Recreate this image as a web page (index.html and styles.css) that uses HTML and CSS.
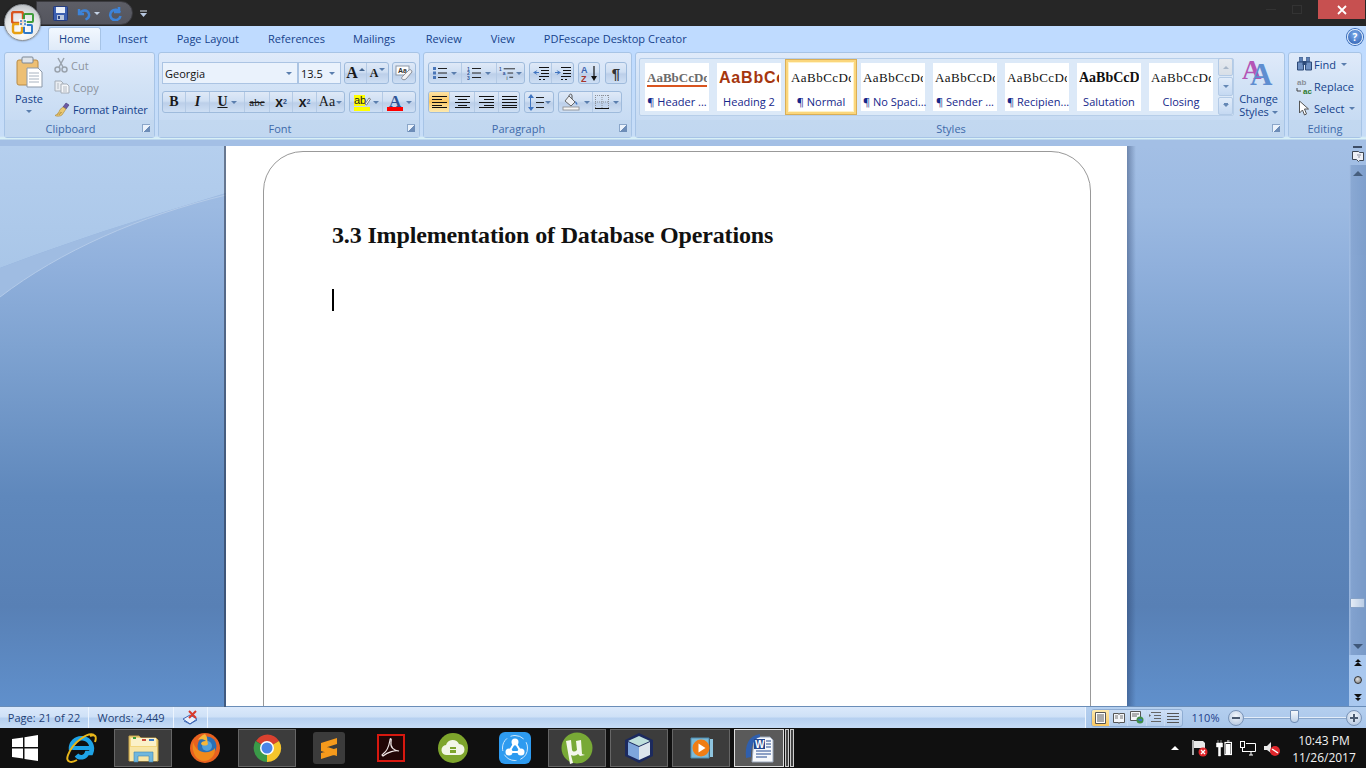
FILE: index.html
```html
<!DOCTYPE html>
<html lang="en">
<head>
    <meta charset="UTF-8">
    <title>Microsoft Word</title>
    <link rel="stylesheet" href="styles.css">
</head>
<body>
    <!-- office orb sits over the title bar and the tabs -->
    <div class="office-btn">
        <svg width="24" height="24" viewBox="0 0 24 24">
            <rect x="1" y="1" width="11" height="11" rx="2" fill="none" stroke="#d9561f" stroke-width="2.4"/>
            <rect x="13" y="3" width="9" height="8" rx="1" fill="none" stroke="#3f9d3c" stroke-width="2"/>
            <rect x="2" y="13" width="9" height="9" rx="2" fill="none" stroke="#e8a012" stroke-width="2.4"/>
            <rect x="13" y="14" width="8" height="8" rx="1" fill="none" stroke="#2f79c9" stroke-width="2"/>
            <path d="M8 8h8v8H8z" fill="#fff" opacity=".75"/>
            <path d="M9 10h2M13 10h2M9 13h2M13 13h2" stroke="#3a78c2" stroke-width="1.6"/>
        </svg>
    </div>

    <header class="titlebar">
        <div class="qat">
            <svg width="15" height="15" viewBox="0 0 15 15"><rect x=".5" y=".5" width="14" height="14" rx="1" fill="#3c5fb0" stroke="#243b7c"/><rect x="3" y="1" width="9" height="6" fill="#e8eef8"/><rect x="4" y="9" width="7" height="5" fill="#b9c6dd"/><rect x="5" y="10" width="2" height="3" fill="#2c4586"/></svg>
            <svg class="qat-undo" width="15" height="15" viewBox="0 0 15 15"><path d="M3 3v5h5M3.500 7.500C6 3.500 12 3.500 13 8c.5 2.500-1 4.500-3.500 5.500" fill="none" stroke="#3d83d8" stroke-width="2.400"/></svg>
            <span class="arr arr-light"></span>
            <svg class="qat-redo" width="15" height="15" viewBox="0 0 15 15"><path d="M11 1v5H6M12 6.500A5.200 5.200 0 1 0 12.500 10" fill="none" stroke="#3d83d8" stroke-width="2.600"/></svg>
        </div>
        <svg class="qat-more" width="7" height="7" viewBox="0 0 7 7"><path d="M0 1h7" stroke="#dfe7f2"/><path d="M0 3h7L3.500 7z" fill="#b8c8e0"/></svg>
        <div class="win-btns">
            <span class="win-ghost win-min"></span>
            <span class="win-ghost win-max"></span>
            <span class="win-close">
                <svg width="10" height="10" viewBox="0 0 10 10"><path d="M1 1l8 8M9 1l-8 8" stroke="#fff" stroke-width="1.800"/></svg>
            </span>
        </div>
    </header>

    <nav class="tabs">
        <span class="tab tab-active">Home</span>
        <span class="tab">Insert</span>
        <span class="tab">Page Layout</span>
        <span class="tab">References</span>
        <span class="tab tab-mail">Mailings</span>
        <span class="tab tab-review">Review</span>
        <span class="tab">View</span>
        <span class="tab">PDFescape Desktop Creator</span>
        <span class="help">?</span>
    </nav>

    <div class="ribbon">
        <section class="group group-clipboard">
            <div class="group-body clip-body">
                <div class="paste">
                    <svg width="27" height="32" viewBox="0 0 27 32"><rect x="1" y="4" width="21" height="25" rx="2" fill="#edbf73" stroke="#b88a44"/><rect x="6" y="1" width="11" height="6" rx="1" fill="#dfe4ea" stroke="#7c8794"/><path d="M11 12h11l4 4v15H11z" fill="#fff" stroke="#8b98a8"/><path d="M13 17h10M13 20h10M13 23h10M13 26h10" stroke="#a8b3c0"/></svg>
                    <span class="paste-label">Paste</span>
                    <span class="arr"></span>
                </div>
                <div class="clip-list">
                    <div class="clip-item is-disabled">
                        <svg width="14" height="16" viewBox="0 0 14 16"><path d="M4 1l5 9M10 1L5 10" stroke="#9aa3ad" stroke-width="1.500"/><circle cx="3.500" cy="12.500" r="2.500" fill="none" stroke="#9aa3ad" stroke-width="1.500"/><circle cx="10.500" cy="12.500" r="2.500" fill="none" stroke="#9aa3ad" stroke-width="1.500"/></svg>
                        <span>Cut</span>
                    </div>
                    <div class="clip-item is-disabled">
                        <svg width="16" height="14" viewBox="0 0 16 14"><path d="M1 1h6l2 2v8H1z" fill="#e9edf2" stroke="#a5adb7"/><path d="M7 4h6l2 2v7H7z" fill="#f5f7fa" stroke="#a5adb7"/><path d="M9 7h4M9 9h4M9 11h4M3 4h2M3 6h2M3 8h2" stroke="#b3bac3"/></svg>
                        <span>Copy</span>
                    </div>
                    <div class="clip-item clip-painter">
                        <svg width="16" height="16" viewBox="0 0 16 16"><path d="M9 6l3-4 3 2-3 4z" fill="#6b5aa6" stroke="#3e3470" stroke-width=".6"/><path d="M9 6l3 2-4 6c-2 1.500-5 1.500-7 .5 2-1 4-3 5-6z" fill="#eac873" stroke="#a8873a" stroke-width=".6"/><path d="M3 14l4-3M5 14l3-3" stroke="#a8873a" stroke-width=".6"/></svg>
                        <span>Format Painter</span>
                    </div>
                </div>
            </div>
            <div class="group-label">Clipboard<span class="launcher"></span></div>
        </section>

        <section class="group group-font">
            <div class="group-body tool-rows">
                <div class="tool-row row-tight">
                    <div class="combo combo-font"><span>Georgia</span><i class="arr"></i></div>
                    <div class="combo combo-size"><span>13.5</span><i class="arr"></i></div>
                    <div class="btns">
                        <span class="btn w-22 glyph-a big">A<i class="arr arr-up"></i></span>
                        <span class="btn w-21 glyph-a small">A<i class="arr"></i></span>
                    </div>
                    <div class="btns">
                        <span class="btn w-22">
                            <svg width="18" height="17" viewBox="0 0 18 17"><rect x="1" y="1" width="13" height="9" fill="#fff" stroke="#8b98a8"/><text x="3" y="8" font-family="Liberation Sans" font-size="7" font-weight="700" fill="#333">Aa</text><path d="M8 11l6-6c1-1 3 0 3 2l-6 7c-1 1-3 1-4 0s0-2 1-3z" fill="#f2f2f4" stroke="#8a8f98"/></svg>
                        </span>
                    </div>
                </div>
                <div class="tool-row">
                    <div class="btns">
                        <span class="btn w-23 fmt fmt-b">B</span>
                        <span class="btn w-24 fmt fmt-i">I</span>
                        <span class="btn w-35 fmt fmt-u"><u>U</u><i class="arr"></i></span>
                        <span class="btn w-25 fmt fmt-s"><s>abc</s></span>
                        <span class="btn w-23 fmt fmt-x">x<sub>2</sub></span>
                        <span class="btn w-24 fmt fmt-x">x<sup>2</sup></span>
                        <span class="btn w-27 fmt fmt-aa">Aa<i class="arr"></i></span>
                    </div>
                    <div class="btns">
                        <span class="btn w-33 color-btn">
                            <svg width="17" height="19" viewBox="0 0 17 19"><rect y="2" width="11" height="11" fill="#ff0"/><text x="0" y="11" font-family="Liberation Sans" font-size="11" fill="#222">ab</text><path d="M11 11l4-6 1.500 1-4 6z" fill="#fff" stroke="#666" stroke-width=".8"/><rect y="14" width="16" height="4" fill="#ff0"/></svg>
                            <i class="arr"></i>
                        </span>
                        <span class="btn w-32 color-btn">
                            <svg width="17" height="19" viewBox="0 0 17 19"><text x="2" y="13.500" font-family="Liberation Serif" font-size="17" font-weight="700" fill="#2f5597">A</text><rect y="14" width="16" height="4" fill="#f00"/></svg>
                            <i class="arr"></i>
                        </span>
                    </div>
                </div>
            </div>
            <div class="group-label">Font<span class="launcher"></span></div>
        </section>

        <section class="group group-para">
            <div class="group-body tool-rows">
                <div class="tool-row">
                    <div class="btns">
                        <span class="btn w-33">
                            <svg class="ln" width="14" height="14" viewBox="0 0 14 14"><path d="M5 2.500h9M5 7h9M5 11.500h9" stroke="#222"/><path d="M0 1h3v3H0zM0 5.500h3v3H0zM0 10h3v3H0z" fill="#4a76b8"/></svg><i class="arr"></i>
                        </span>
                        <span class="btn w-35">
                            <svg class="ln" width="14" height="14" viewBox="0 0 14 14"><path d="M5 2.500h9M5 7h9M5 11.500h9" stroke="#222"/><text x="0" y="4.500" font-size="5" font-family="Liberation Sans" font-weight="700" fill="#2f5597">1</text><text x="0" y="9" font-size="5" font-family="Liberation Sans" font-weight="700" fill="#2f5597">2</text><text x="0" y="13.500" font-size="5" font-family="Liberation Sans" font-weight="700" fill="#2f5597">3</text></svg><i class="arr"></i>
                        </span>
                        <span class="btn w-27 tight">
                            <svg class="ln" width="17" height="15" viewBox="0 0 17 15"><path d="M5 2.500h12M9 7h6M11 11.500h4" stroke="#222"/><text x="0" y="4.500" font-size="5" font-family="Liberation Sans" font-weight="700" fill="#2f5597">1</text><text x="4" y="9" font-size="5" font-family="Liberation Sans" font-weight="700" fill="#2f5597">a</text><text x="8" y="14" font-size="5" font-family="Liberation Sans" fill="#222">i</text></svg><i class="arr"></i>
                        </span>
                    </div>
                    <div class="btns">
                        <span class="btn w-22"><svg width="16" height="14" viewBox="0 0 16 14"><path d="M6 1.500h10M8 4.500h8M8 7.500h8M6 10.500h10M6 13.500h2M10 13.500h2" stroke="#111"/><path d="M6 6H3l1.500-2L0 6.500 4.500 9 3 7h3z" fill="#3f74c0"/></svg></span>
                        <span class="btn w-21"><svg width="16" height="14" viewBox="0 0 16 14"><path d="M6 1.500h10M8 4.500h8M8 7.500h8M6 10.500h10M6 13.500h2M10 13.500h2" stroke="#111"/><path d="M0 6h3L1.500 4 6 6.500 1.500 9 3 7H0z" fill="#3f74c0"/></svg></span>
                    </div>
                    <div class="btns">
                        <span class="btn w-20">
                            <svg width="17" height="17" viewBox="0 0 17 17"><text x="0" y="8" font-size="9" font-family="Liberation Sans" font-weight="700" fill="#3a62ad">A</text><text x="0" y="16.500" font-size="9" font-family="Liberation Sans" font-weight="700" fill="#a5342c">Z</text><path d="M13 1v13" stroke="#111" stroke-width="1.200"/><path d="M10 11h6l-3 5z" fill="#111"/></svg>
                        </span>
                    </div>
                    <div class="btns btn-pil">
                        <span class="btn w-20 pilcrow">¶</span>
                    </div>
                </div>
                <div class="tool-row">
                    <div class="btns">
                        <span class="btn w-21 is-on"><svg class="ln" width="15" height="12" viewBox="0 0 15 12"><path d="M0 .5h15M0 3.500h10M0 6.500h15M0 9.500h10M0 11.500h15" stroke="#111"/></svg></span>
                        <span class="btn w-25"><svg class="ln" width="15" height="12" viewBox="0 0 15 12"><path d="M0 .5h15M3 3.500h9M0 6.500h15M3 9.500h9M0 11.500h15" stroke="#111"/></svg></span>
                        <span class="btn w-24"><svg class="ln" width="15" height="12" viewBox="0 0 15 12"><path d="M0 .5h15M5 3.500h10M0 6.500h15M5 9.500h10M0 11.500h15" stroke="#111"/></svg></span>
                        <span class="btn w-20"><svg class="ln" width="15" height="12" viewBox="0 0 15 12"><path d="M0 .5h15M0 3.500h15M0 6.500h15M0 9.500h15M0 11.500h15" stroke="#111"/></svg></span>
                    </div>
                    <div class="btns">
                        <span class="btn w-28 tight">
                            <svg class="ln" width="16" height="17" viewBox="0 0 16 17"><path d="M3 0l3 4H0zM3 17l3-4H0z" fill="#3f74c0"/><path d="M2.500 4v9" stroke="#3f74c0"/><path d="M8 3.500h8M8 8.500h8M8 13.500h8" stroke="#222"/></svg><i class="arr"></i>
                        </span>
                    </div>
                    <div class="btns">
                        <span class="btn w-34">
                            <svg class="ln" width="18" height="18" viewBox="0 0 18 18"><path d="M7 3l6 6-4 4-6-5z" fill="#eef1f6" stroke="#666"/><path d="M7 3c0-2 3-3 3 0v3" fill="none" stroke="#555"/><path d="M13 8c2 1 3 3 2 4-1-1-2-2-2-4z" fill="#3f74c0"/><rect x="1" y="14" width="16" height="3" fill="#f6f6f6" stroke="#888" stroke-width=".8"/></svg><i class="arr"></i>
                        </span>
                        <span class="btn w-28">
                            <svg class="ln" width="14" height="14" viewBox="0 0 14 14"><path d="M.5 0v14M7 0v14M13.500 0v14M0 .5h14M0 7h14" stroke="#8b8f96" stroke-dasharray="1 1"/><path d="M0 13.500h14" stroke="#111"/></svg><i class="arr"></i>
                        </span>
                    </div>
                </div>
            </div>
            <div class="group-label">Paragraph<span class="launcher"></span></div>
        </section>

        <section class="group group-styles">
            <div class="group-body styles-body">
                <div class="gallery">
                    <div class="gallery-items">
                        <div class="style-card"><span class="style-sample s-header">AaBbCcDd</span><span class="style-name">¶ Header ...</span></div>
                        <div class="style-card"><span class="style-sample s-heading">AaBbCc</span><span class="style-name">Heading 2</span></div>
                        <div class="style-card is-current"><span class="style-sample">AaBbCcDd</span><span class="style-name">¶ Normal</span></div>
                        <div class="style-card"><span class="style-sample">AaBbCcDd</span><span class="style-name">¶ No Spaci...</span></div>
                        <div class="style-card"><span class="style-sample">AaBbCcDd</span><span class="style-name">¶ Sender ...</span></div>
                        <div class="style-card"><span class="style-sample">AaBbCcDd</span><span class="style-name">¶ Recipien...</span></div>
                        <div class="style-card"><span class="style-sample s-bold">AaBbCcD</span><span class="style-name">Salutation</span></div>
                        <div class="style-card"><span class="style-sample">AaBbCcDd</span><span class="style-name">Closing</span></div>
                    </div>
                    <div class="gallery-scroll">
                        <span class="gs gs-up"><i></i></span>
                        <span class="gs gs-down"><i></i></span>
                        <span class="gs gs-more"><i></i></span>
                    </div>
                </div>
                <div class="change-styles">
                    <svg width="32" height="29" viewBox="0 0 32 29">
                        <text x="0" y="22" font-family="Liberation Serif" font-size="27" font-weight="700" fill="#b455b5">A</text>
                        <text x="8" y="28" font-family="Liberation Serif" font-size="31" font-weight="700" fill="#5f8ed0">A</text>
                    </svg>
                    <span>Change</span>
                    <span>Styles<i class="arr"></i></span>
                </div>
            </div>
            <div class="group-label">Styles<span class="launcher"></span></div>
        </section>

        <section class="group group-editing">
            <div class="group-body edit-body">
                <div class="edit-item">
                    <svg width="16" height="14" viewBox="0 0 16 14"><path d="M3 0h3v5H3zM10 0h3v5h-3z" fill="#5b7fb5" stroke="#2d4a78" stroke-width=".6"/><path d="M1 5h6v8H1zM9 5h6v8H9z" fill="#6f90c2" stroke="#2d4a78"/><path d="M6 4h4v4H6z" fill="#2d4a78"/></svg>
                    <span>Find</span><i class="arr"></i>
                </div>
                <div class="edit-item">
                    <svg width="17" height="17" viewBox="0 0 17 17"><text x="1" y="7" font-family="Liberation Sans" font-size="8" font-weight="700" fill="#8b9098">ab</text><text x="7" y="15.500" font-family="Liberation Sans" font-size="8" font-weight="700" fill="#2b7a2b">ac</text><path d="M1 10v3h4" fill="none" stroke="#444"/></svg>
                    <span>Replace</span>
                </div>
                <div class="edit-item">
                    <svg width="16" height="17" viewBox="0 0 16 17"><path d="M3 1v12l3-3 2 5 2-1-2-5h4z" fill="#fff" stroke="#555"/></svg>
                    <span>Select</span><i class="arr"></i>
                </div>
            </div>
            <div class="group-label group-label-plain">Editing</div>
        </section>
    </div>

    <main class="workspace">
        <svg class="swoosh" width="226" height="170" viewBox="0 0 226 170">
            <defs><linearGradient id="sky" x1="0" y1="0" x2="0" y2="1"><stop offset="0" stop-color="#b5cfee"/><stop offset="1" stop-color="#a9c6e8"/></linearGradient></defs>
            <path d="M0 0h226v47C150 70 70 95 0 122z" fill="url(#sky)"/>
            <path d="M226 47C150 70 70 95 0 122v29C60 105 140 70 226 49z" fill="#9fbce2"/>
            <path d="M0 151C60 105 140 70 226 49" fill="none" stroke="#b4cbe9"/>
        </svg>
        <div class="page">
            <div class="page-border">
                <h1 class="doc-title">3.3 Implementation of Database Operations</h1>
                <div class="caret"></div>
            </div>
        </div>
        <aside class="scrollbar">
            <div class="ruler-toggle">
                <span class="ruler-dash"></span>
                <svg width="12" height="11" viewBox="0 0 12 11"><path d="M.5.500h6l1 1h4v8h-4l-1 1-2-2h-4z" fill="#eef0f6" stroke="#3d4654"/><path d="M5 4h4M6 6h2" stroke="#8a8fa0"/></svg>
            </div>
            <div class="scroll-track">
                <i class="scroll-up"></i>
                <span class="scroll-thumb"></span>
                <i class="scroll-down"></i>
            </div>
            <div class="browse">
                <svg width="8" height="8" viewBox="0 0 8 8"><path d="M4 0l3 3H1zM4 3l4 4H0z" fill="#111"/></svg>
                <span class="browse-dot"></span>
                <svg width="8" height="8" viewBox="0 0 8 8"><path d="M4 8L1 5h6zM4 5L0 1h8z" fill="#111"/></svg>
            </div>
        </aside>
    </main>

    <footer class="statusbar">
        <span class="st-cell st-page">Page: 21 of 22</span>
        <span class="st-cell st-words">Words: 2,449</span>
        <span class="st-cell st-proof">
            <svg width="17" height="15" viewBox="0 0 17 15"><path d="M1 9l7-4 7 4-7 5z" fill="#e8eefb" stroke="#3f68b5"/><path d="M2 11l6 3 7-4" fill="none" stroke="#3f68b5"/><path d="M7 1l7 7M14 1L7 8" stroke="#d8392b" stroke-width="2"/></svg>
        </span>
        <span class="st-fill"></span>
        <div class="st-right">
            <div class="view-btns">
                <span class="view-btn is-on"><svg width="11" height="12" viewBox="0 0 11 12"><path d="M.5.500h10v11H.5z" fill="#fff" stroke="#555"/><path d="M2 3h7M2 5h7M2 7h7M2 9h7" stroke="#555"/></svg></span>
                <span class="view-btn"><svg width="12" height="12" viewBox="0 0 12 12"><path d="M.5 1.500h5l.5 1 .5-1h5v9h-5l-.5 1-.5-1h-5z" fill="#f4f6fa" stroke="#555"/><path d="M2 4h3M2 6h3M7 4h3M7 6h3" stroke="#777"/></svg></span>
                <span class="view-btn"><svg width="14" height="13" viewBox="0 0 14 13"><path d="M.5.500h10v9H.5z" fill="#f4f6fa" stroke="#555"/><path d="M2 3h7M2 5h5" stroke="#666"/><circle cx="10" cy="9" r="3.500" fill="#3e8f4a"/><path d="M8 8h4v2H9z" fill="#3a78c2"/></svg></span>
                <span class="view-btn"><svg width="12" height="11" viewBox="0 0 12 11"><path d="M2 .5h10M5 3.500h7M5 6.500h7M2 9.500h10" stroke="#666"/><path d="M0 2l2 1.500L0 5z" fill="#666"/></svg></span>
                <span class="view-btn"><svg width="12" height="10" viewBox="0 0 12 10"><path d="M0 .5h12M0 3.500h12M0 6.500h12M0 9.500h12" stroke="#555"/></svg></span>
            </div>
            <span class="zoom-pct">110%</span>
            <span class="zoom-btn"><i class="zoom-h"></i></span>
            <span class="zoom-track"><i class="zoom-thumb"></i></span>
            <span class="zoom-btn"><i class="zoom-h"></i><i class="zoom-v"></i></span>
        </div>
    </footer>

    <div class="taskbar">
        <span class="task task-start">
            <svg width="26" height="26" viewBox="0 0 26 26"><path d="M0 4l11-1.500V12H0zM12.500 2.300L26 0v12H12.500zM0 13.500h11v10L0 22zM12.500 13.500H26V26l-13.500-2z" fill="#fff"/></svg>
        </span>
        <span class="task">
            <svg width="31" height="31" viewBox="0 0 31 31"><path d="M5 17a10.500 10.500 0 1 1 20 3H21a6 6 0 0 1-10.500 2" fill="none" stroke="#1ea3e6" stroke-width="4.500"/><path d="M7 15h20" stroke="#1ea3e6" stroke-width="4"/><path d="M28 2C22-1 7 9 2 22c-3 8 4 8 9 5M24 3c5-2 7 0 5 6" fill="none" stroke="#e9b71a" stroke-width="2"/></svg>
        </span>
        <span class="task is-open">
            <svg width="31" height="30" viewBox="0 0 31 30"><path d="M1 3h10l2 2h15l2 2v21H1z" fill="#f2d67e" stroke="#c4a24c"/><path d="M3 5h25v8H3z" fill="#fbf1c8"/><path d="M5 4h3v2H5z" fill="#3f9d3c"/><path d="M14 6h4v2h-4z" fill="#c94b3a"/><path d="M21 6h5v2h-5z" fill="#3a78c2"/><path d="M2 14h27v14H2z" fill="#f7e5a6"/><path d="M6 19h19v10h-4v-6H10v6H6z" fill="#6fb7de" stroke="#3f85b0" stroke-width=".6"/></svg>
        </span>
        <span class="task">
            <svg width="30" height="30" viewBox="0 0 30 30"><circle cx="15" cy="15" r="15" fill="#e8611f"/><circle cx="17" cy="13" r="9.500" fill="#2a6fb5"/><circle cx="17" cy="13" r="5" fill="#4fa0dc"/><path d="M3 9c2 6 5 9 10 10 5 1 10-1 12-4 1 7-5 13-11 13C7 28 1 20 3 9z" fill="#f08a1c"/><path d="M15 1c-3 1-6 4-7 6 2-1 6-1 8 1-3 0-5 1-5 3 2 2 6 2 7 0-1-3 0-7-3-10z" fill="#f6b73a"/></svg>
        </span>
        <span class="task is-open">
            <svg width="30" height="30" viewBox="0 0 30 30"><path d="M15 15L4 8A13.500 13.500 0 0 1 27 8z" fill="#d9412f"/><path d="M15 15L27 8A13.800 13.800 0 0 1 15 29z" fill="#f6c52c"/><path d="M15 15v14A14 14 0 0 1 3.500 8z" fill="#3a9a48"/><circle cx="15" cy="15" r="7" fill="#fff"/><circle cx="15" cy="15" r="5.500" fill="#4a85e8"/></svg>
        </span>
        <span class="task">
            <svg width="32" height="32" viewBox="0 0 32 32"><rect width="32" height="32" rx="3" fill="#3b3b3b"/><path d="M8 11l16-5v6L8 17zM8 13l16 5v6L8 19zM8 21l16-5v6L8 27z" fill="#f59a1c"/></svg>
        </span>
        <span class="task">
            <svg width="28" height="28" viewBox="0 0 28 28"><rect x="1" y="1" width="26" height="26" fill="#210606" stroke="#d8180f" stroke-width="2"/><path d="M6 20c3-2 6-8 7-14 0-2 2-2 1 2-1 5 3 9 8 9-4-1-11 1-16 5 0 0-2-1 0-2z" fill="none" stroke="#f0e6e6" stroke-width="1.200"/></svg>
        </span>
        <span class="task">
            <svg width="30" height="30" viewBox="0 0 30 30"><circle cx="15" cy="15" r="15" fill="#7ea52c"/><path d="M9 22a5 5 0 0 1-1-10 7 7 0 0 1 13-1 5.500 5.500 0 0 1 0 11z" fill="#f2f5e6"/><path d="M12 14h6v6h-6z" fill="#7ea52c"/><path d="M12 16.500h6" stroke="#f2f5e6"/></svg>
        </span>
        <span class="task">
            <svg width="32" height="32" viewBox="0 0 32 32"><rect width="32" height="32" rx="6" fill="#2e9bf0"/><circle cx="16" cy="16" r="12.500" fill="none" stroke="#cfe8fc" stroke-dasharray="14 4"/><path d="M16 10l6 10H10z" fill="none" stroke="#fff" stroke-width="2"/><circle cx="16" cy="10" r="3.500" fill="#fff"/><circle cx="10" cy="20" r="3.500" fill="#fff"/><circle cx="22" cy="20" r="3.500" fill="#fff"/></svg>
        </span>
        <span class="task is-open">
            <svg width="32" height="32" viewBox="0 0 32 32"><circle cx="16" cy="16" r="15.500" fill="#78a936"/><path d="M5 9l5-1 1 10c1 2 3 2 5 0l-1-9 5-1 1 14 3 1-5 1-2-2c-2 2-5 2-7 1l2 8-3 1z" fill="#f4f7ec"/></svg>
        </span>
        <span class="task is-open">
            <svg width="30" height="32" viewBox="0 0 30 32"><path d="M15 1l14 7v16l-14 7-14-7V8z" fill="#1c2a5e"/><path d="M15 4l11 5-11 5L4 9z" fill="#bfe0dc"/><path d="M4 10l11 5v13L4 23z" fill="#7ea6dc"/><path d="M26 10l-11 5v13l11-5z" fill="#dce5ec"/></svg>
        </span>
        <span class="task is-open">
            <svg width="26" height="25" viewBox="0 0 26 25"><path d="M3 2h18v20H3z" fill="#7cbad8" stroke="#4d8db2"/><path d="M22 3h3v18h-3z" fill="#8ec4de"/><circle cx="13" cy="12" r="8.500" fill="#f07d14"/><path d="M10.500 7.500v9l7-4.500z" fill="#fff"/></svg>
        </span>
        <span class="task task-word">
            <svg width="30" height="31" viewBox="0 0 30 31"><path d="M10 4h16l3 3v22H8z" fill="#f6f8fb" stroke="#9aa8bc"/><path d="M2 25C1 12 4 3 16 1v3C9 6 7 14 7 24z" fill="#2f5fae"/><path d="M10 6h11v10H10z" fill="#23488f"/><text x="11" y="15" font-family="Liberation Sans" font-size="10" font-weight="700" fill="#fff">W</text><path d="M22 8h5M22 11h5M22 14h5M12 18h15M12 21h15M12 24h11" stroke="#23488f" stroke-width="1.200"/></svg>
        </span>
        <span class="task-stack"></span>
        <span class="task-stack"></span>

        <div class="tray">
            <span class="tray-up"></span>
            <svg width="16" height="17" viewBox="0 0 16 17"><path d="M1 0v15" stroke="#fff" stroke-width="1.300"/><path d="M2 1h9l2 2v5H2z" fill="#e8e8e8"/><circle cx="11" cy="12" r="4.500" fill="#e0262b"/><path d="M9 10l4 4M13 10l-4 4" stroke="#fff" stroke-width="1.300"/></svg>
            <svg width="16" height="17" viewBox="0 0 16 17"><path d="M2 0v3M5 0v3M0.500 3h6v4h-2v9h-2V7h-2z" fill="#fff" stroke="#fff" stroke-width=".5"/><rect x="9" y="2.500" width="6.500" height="12" fill="none" stroke="#fff" stroke-width="1.200"/><rect x="10" y="4" width="4.500" height="10" fill="#fff"/><path d="M11 1h2.500" stroke="#fff"/></svg>
            <svg width="16" height="15" viewBox="0 0 16 15"><rect x=".5" y=".5" width="4" height="6" fill="none" stroke="#fff"/><path d="M2.500 7v4" stroke="#fff"/><path d="M6 2.500h9.500v8H2.500" fill="none" stroke="#fff"/><path d="M9 14h4M11 11v3" stroke="#fff"/></svg>
            <svg width="16" height="15" viewBox="0 0 16 15"><path d="M0 5h3l4-4v11L3 9H0z" fill="#e9e9e9"/><circle cx="11" cy="10" r="5" fill="#e0262b"/><path d="M8 8l6 4" stroke="#fff" stroke-width="1.500"/></svg>
            <div class="clock"><span>10:43 PM</span><span>11/26/2017</span></div>
        </div>
    </div>
</body>
</html>
```

FILE: styles.css
```css
* {
    box-sizing: border-box;
}

html, body {
    height: 100%;
}

body {
    margin: 0;
    width: 1366px;
    height: 768px;
    overflow: hidden;
    display: flex;
    flex-direction: column;
    position: relative;
    font-family: "Open Sans", "Noto Sans", sans-serif;
    font-size: 11px;
    color: #15428b;
    background-color: #101010;
}

i {
    font-style: normal;
}

svg {
    display: block;
    flex: none;
}

/* little dropdown triangle used all over the ribbon */
.arr {
    display: inline-block;
    flex: none;
    width: 0;
    height: 0;
    border-left: 3px solid transparent;
    border-right: 3px solid transparent;
    border-top: 3px solid #5a7eae;
}

.arr-light {
    border-top-color: #c5d3e6;
}

.arr-up {
    border-top: 0;
    border-bottom: 3px solid #44658f;
}

/* title bar */
.titlebar {
    flex: none;
    height: 26px;
    background-color: #262626;
    display: flex;
    align-items: flex-start;
}

.office-btn {
    position: absolute;
    left: 4px;
    top: 4px;
    width: 37px;
    height: 37px;
    border-radius: 50%;
    background: radial-gradient(circle at 50% 75%, #ffffff 0%, #e4e6e8 55%, #a8adb3 100%);
    border: 1px solid #8d9298;
    box-shadow: 0 0 2px rgba(0, 0, 0, 0.5);
    display: flex;
    align-items: center;
    justify-content: center;
    z-index: 2;
}

.qat {
    margin: 1px 0 0 36px;
    width: 97px;
    height: 24px;
    padding-left: 16px;
    display: flex;
    align-items: center;
    background: linear-gradient(#5d5e66, #54555e);
    border: 1px solid #3b3b40;
    border-radius: 0 12px 12px 0;
}

.qat-undo {
    margin-left: 8px;
}

.qat .arr {
    margin-left: 3px;
}

.qat-redo {
    margin-left: 8px;
}

.qat-more {
    margin: 10px 0 0 7px;
}

.win-btns {
    margin-left: auto;
    margin-right: 1px;
    display: flex;
    align-items: center;
}

.win-ghost {
    width: 10px;
    margin-right: 16px;
    border-bottom: 1px solid #333;
}

.win-max {
    height: 9px;
    border: 1px solid #333;
}

.win-close {
    width: 47px;
    height: 19px;
    background-color: #c75050;
    display: flex;
    align-items: center;
    justify-content: center;
}

/* tabs */
.tabs {
    flex: none;
    height: 24px;
    background-color: #bfdbff;
    display: flex;
    align-items: flex-end;
    padding-left: 48px;
}

.tab {
    height: 23px;
    padding: 0 14.5px;
    line-height: 24px;
    white-space: nowrap;
}

.tab-active {
    width: 53px;
    padding: 0;
    margin-right: 2.500px;
    line-height: 22px;
    text-align: center;
    background: linear-gradient(#f2f8ff, #dfeaf8);
    border: 1px solid #a6c3e6;
    border-bottom: 0;
    border-radius: 3px 3px 0 0;
}

.tab-mail {
    margin-left: -1px;
}

.tab-review {
    margin-left: 1.500px;
}

.help {
    margin: 0 3px 5px auto;
    width: 16px;
    height: 16px;
    border-radius: 50%;
    background: radial-gradient(circle at 50% 35%, #7fb0ee, #2858ac);
    border: 1px solid #dbe8f8;
    box-shadow: 0 0 0 1px #3a6cb8;
    color: #fff;
    font-weight: 700;
    font-size: 10px;
    line-height: 14px;
    text-align: center;
}

/* ribbon */
.ribbon {
    flex: none;
    height: 96px;
    padding: 2px 4px 0 4px;
    display: flex;
    gap: 3px;
    background: linear-gradient(#bfdbff 0, #c7ddf7 86px, #d8f0f6 88px, #d8f0f6 89px, #a3bfe5 90px, #a3bfe5 96px);
}

.group {
    height: 86px;
    flex: none;
    display: flex;
    flex-direction: column;
    border: 1px solid #a7c4e6;
    border-radius: 3px;
    background: linear-gradient(#dfeafa 0, #d3e3f6 30px, #c7dbf3 68px);
}

.group-body {
    height: 67px;
    flex: none;
}

.group-label {
    flex: none;
    height: 17px;
    padding-right: 18px;
    line-height: 17px;
    text-align: center;
    color: #3e6aaa;
    background: linear-gradient(#c2d8f0, #c1d7f0);
    position: relative;
}

.group-label-plain {
    padding-right: 0;
}

.launcher {
    position: absolute;
    right: 4px;
    top: 4px;
    width: 8px;
    height: 8px;
    border-left: 1px solid #8aa6c9;
    border-top: 1px solid #8aa6c9;
    background: linear-gradient(135deg, #eaf2fb 50%, #6d8db8 50%);
}

.group-clipboard {
    width: 151px;
}

.group-font {
    width: 262px;
}

.group-para {
    width: 209px;
}

.group-styles {
    width: 650px;
}

.group-editing {
    width: 74px;
}

/* clipboard */
.clip-body {
    display: flex;
}

.paste {
    width: 48px;
    padding-top: 3px;
    display: flex;
    flex-direction: column;
    align-items: center;
}

.paste svg {
    margin-left: 1px;
}

.paste-label {
    margin-top: 3px;
    line-height: 15px;
}

.paste .arr {
    margin-top: 4px;
}

.clip-list {
    padding-top: 1px;
    display: flex;
    flex-direction: column;
}

.clip-item {
    height: 22px;
    display: flex;
    align-items: center;
    gap: 3px;
    white-space: nowrap;
}

.clip-item svg {
    margin-left: 1px;
}

.clip-painter {
    letter-spacing: -0.15px;
}

.is-disabled {
    color: #8d949e;
}

/* font + paragraph rows */
.tool-rows {
    padding: 9px 0 0 3px;
    display: flex;
    flex-direction: column;
    gap: 7px;
}

.group-para .tool-rows {
    padding-left: 4px;
}

.tool-row {
    height: 22px;
    display: flex;
    gap: 4px;
}

.row-tight {
    gap: 3px;
}

.combo {
    flex: none;
    height: 22px;
    background-color: #eaf2fc;
    border: 1px solid #abc4e3;
    display: flex;
    align-items: center;
    justify-content: space-between;
    padding: 0 5px 0 2px;
    color: #111;
    font-size: 11px;
}

.combo-font {
    width: 136px;
    margin-right: -3px;
}

.combo-size {
    width: 43px;
}

.btns {
    flex: none;
    height: 22px;
    display: flex;
    border: 1px solid #9fbbdc;
    border-radius: 3px;
    background: linear-gradient(#dfe9f7 0, #cfdff3 45%, #bccfe9 55%, #cedff4 100%);
}

.btn-pil {
    margin-left: 1px;
}

.btn {
    flex: none;
    height: 100%;
    display: flex;
    align-items: center;
    justify-content: center;
    gap: 4px;
    border-right: 1px solid #b4cae5;
    color: #1a1a1a;
}

.btn:last-child {
    border-right: 0;
}

.tight {
    gap: 1px;
}

.tight svg {
    width: 16px;
}

.w-20 { width: 20px; }
.w-21 { width: 21px; }
.w-22 { width: 22px; }
.w-23 { width: 23px; }
.w-24 { width: 24px; }
.w-25 { width: 25px; }
.w-27 { width: 27px; }
.w-28 { width: 28px; }
.w-32 { width: 32px; }
.w-33 { width: 33px; }
.w-34 { width: 34px; }
.w-35 { width: 35px; }

.is-on {
    background: linear-gradient(#fde3a4 0, #fbc65f 50%, #fbd17a 60%, #fde9ae 100%);
    border-radius: 2px 0 0 2px;
}

.glyph-a {
    font-family: "Liberation Serif", serif;
    font-weight: 700;
    gap: 0;
    align-items: center;
}

.big {
    font-size: 16px;
}

.small {
    font-size: 12px;
}

.glyph-a .arr {
    margin: -8px 0 0 1px;
}

.fmt {
    font-family: "Liberation Serif", serif;
    font-size: 14px;
    font-weight: 700;
    gap: 3px;
}

.fmt-i {
    font-style: italic;
}

.fmt-s {
    font-size: 11px;
    font-weight: 400;
}

.fmt-x {
    font-family: "Liberation Sans", sans-serif;
    font-size: 14px;
    gap: 0;
}

.fmt-x sub,
.fmt-x sup {
    font-size: 7px;
    line-height: 0;
    color: #2a4a80;
}

.fmt-aa {
    font-size: 14px;
    font-weight: 400;
    gap: 1px;
}

.color-btn {
    gap: 2px;
}

.pilcrow {
    font-family: "Liberation Sans", sans-serif;
    font-size: 15px;
    font-weight: 700;
    color: #333;
}

/* styles gallery */
.styles-body {
    padding: 5px 0 0 3px;
    display: flex;
}

.gallery {
    flex: none;
    width: 595px;
    height: 58px;
    display: flex;
    border: 1px solid #b7cee9;
    background-color: #dce9f8;
    border-radius: 2px;
}

.gallery-items {
    width: 578px;
    padding: 4px 0 0 5px;
    display: flex;
    gap: 8px;
}

.style-card {
    width: 64px;
    height: 48px;
    padding-left: 2px;
    background-color: #fff;
    display: flex;
    flex-direction: column;
    white-space: nowrap;
}

.style-sample {
    width: 60px;
    height: 31px;
    overflow: hidden;
    padding-top: 7px;
    line-height: 16px;
    font-family: "Liberation Serif", serif;
    font-size: 13px;
    letter-spacing: 0.45px;
    color: #111;
    flex: none;
}

.style-name {
    width: 60px;
    line-height: 15px;
    text-align: center;
    color: #15278b;
}

.s-header {
    font-size: 13px;
    letter-spacing: 0;
    font-weight: 700;
    color: #6b6b6b;
    background: linear-gradient(#d9541e, #d9541e) no-repeat 0 22px / 100% 2px;
}

.s-heading {
    font-family: "Liberation Sans", sans-serif;
    font-size: 16px;
    letter-spacing: 0.8px;
    font-weight: 700;
    color: #a5360e;
}

.s-bold {
    font-size: 14px;
    letter-spacing: 0;
    font-weight: 700;
}

.is-current {
    box-shadow: 0 0 0 1px #fff3c8, 0 0 0 3px #fbd67c, 0 0 0 4px #d9ae58;
}

.gallery-scroll {
    flex: none;
    width: 15px;
    margin-top: -1px;
    display: flex;
    flex-direction: column;
    gap: 1px;
}

.gs {
    flex: 1;
    border: 1px solid #b3cae6;
    border-radius: 2px;
    background: linear-gradient(#e1ecfa, #c5d9f2);
    display: flex;
    align-items: center;
    justify-content: center;
}

.gs i {
    width: 0;
    height: 0;
    border-left: 3px solid transparent;
    border-right: 3px solid transparent;
    border-top: 3px solid #6588b5;
}

.gs-up i {
    border-top: 0;
    border-bottom: 3px solid #a8b6c8;
}

.gs-up {
    background: linear-gradient(#e6eaf0, #d8dfe8);
}

.gs-more i {
    box-shadow: 0 -2px 0 -1px #6588b5;
}

.change-styles {
    flex: none;
    width: 49px;
    margin-left: 0;
    display: flex;
    flex-direction: column;
    align-items: center;
    line-height: 13px;
}

.change-styles svg {
    margin-bottom: 6px;
    margin-top: -1px;
    margin-right: 2px;
}

.change-styles .arr {
    margin-left: 3px;
    vertical-align: 2px;
}

/* editing */
.edit-body {
    padding: 0 0 0 6px;
    display: flex;
    flex-direction: column;
}

.edit-item {
    height: 22px;
    display: flex;
    align-items: center;
    white-space: nowrap;
}

.edit-item svg {
    width: 19px;
}

.edit-item .arr {
    margin-left: 5px;
}

/* document area */
.workspace {
    flex: none;
    height: 561px;
    position: relative;
    display: flex;
    padding-left: 226px;
    background: linear-gradient(#a3bfe5 0, #9cbae2 60px, #90b0dc 120px, #7fa3d1 200px, #5f88bc 350px, #5880b5 460px, #6090cc 561px);
}

.swoosh {
    position: absolute;
    left: 0;
    top: 0;
}

.page {
    position: relative;
    flex: none;
    width: 901px;
    padding: 5px 36px 0 37px;
    background-color: #fff;
    overflow: hidden;
}

.page-border {
    height: 640px;
    padding: 69px 0 0 68px;
    border: 1px solid #999;
    border-radius: 40px;
}

.doc-title {
    margin: 0;
    font-family: "Liberation Serif", serif;
    font-size: 24px;
    letter-spacing: -0.15px;
    line-height: 28px;
    font-weight: 700;
    color: #111;
}

.caret {
    width: 2px;
    height: 22px;
    margin-top: 40px;
    background-color: #000;
}

.workspace::after {
    content: "";
    position: absolute;
    left: 1127px;
    top: 0;
    bottom: 0;
    width: 9px;
    background: linear-gradient(to right, rgba(30, 50, 90, 0.4), rgba(30, 50, 90, 0));
}

.workspace::before {
    content: "";
    position: absolute;
    left: 224px;
    top: 0;
    bottom: 0;
    width: 2px;
    background-color: rgba(40, 50, 70, 0.55);
    z-index: 1;
}

/* scrollbar */
.scrollbar {
    position: relative;
    margin-left: 222px;
    width: 17px;
    display: flex;
    flex-direction: column;
    align-items: center;
}

.ruler-toggle {
    flex: none;
    height: 19px;
    display: flex;
    flex-direction: column;
    align-items: center;
    gap: 3px;
}

.ruler-dash {
    width: 9px;
    height: 2px;
    background-color: #3d4d66;
}

.scroll-track {
    flex: 1;
    width: 100%;
    position: relative;
    background: linear-gradient(to right, #a6c1e6 0, #87a6d2 15%, #7c9dca 100%);
    opacity: 0.9;
}

.scroll-up,
.scroll-down {
    position: absolute;
    left: 4px;
    width: 0;
    height: 0;
    border-left: 5px solid transparent;
    border-right: 5px solid transparent;
}

.scroll-up {
    top: 6px;
    border-bottom: 5px solid #3d5473;
}

.scroll-down {
    bottom: 6px;
    border-top: 5px solid #3d5473;
}

.scroll-thumb {
    position: absolute;
    top: 433px;
    left: 1px;
    width: 15px;
    height: 10px;
    background: linear-gradient(to right, #f4f8fd, #c5d6ec);
    border: 1px solid #8ba6c9;
    border-radius: 1px;
}

.browse {
    flex: none;
    height: 52px;
    width: 100%;
    padding-top: 4px;
    background-color: #a9c8ef;
    display: flex;
    flex-direction: column;
    align-items: center;
    gap: 9px;
}

.browse-dot {
    width: 8px;
    height: 8px;
    border-radius: 50%;
    border: 1px solid #333;
    background: radial-gradient(circle at 40% 35%, #e0e0e0, #777);
}

/* status bar */
.statusbar {
    flex: none;
    height: 22px;
    margin-top: -1px;
    display: flex;
    align-items: stretch;
    border-top: 1px solid #6a8db8;
    background: linear-gradient(#dbe9fb 0, #cfe1f7 45%, #b6d0f0 55%, #c6dcf6 100%);
    position: relative;
}

.st-cell {
    display: flex;
    align-items: center;
    justify-content: center;
    border-right: 1px solid #ecf4fe;
    white-space: nowrap;
    color: #1e3f76;
}

.st-page {
    width: 89px;
    letter-spacing: 0.05px;
}

.st-words {
    width: 85px;
}

.st-proof {
    width: 34px;
}

.st-fill {
    flex: 1;
}

.st-right {
    width: 281px;
    padding-left: 5px;
    border-left: 1px solid #ecf4fe;
    display: flex;
    align-items: center;
    background: linear-gradient(#b4cfef, #a9c6ea);
}

.view-btns {
    width: 92px;
    height: 18px;
    display: flex;
    border: 1px solid #8fadd3;
    border-radius: 3px;
    background: linear-gradient(#cfe0f6, #b4cdec);
}

.view-btn {
    flex: 1;
    display: flex;
    align-items: center;
    justify-content: center;
    border-right: 1px solid #c7daf2;
}

.view-btn:last-child {
    border-right: 0;
}

.view-btn.is-on {
    background: linear-gradient(#fde9ae, #fbc85f);
}

.zoom-pct {
    width: 45px;
    text-align: center;
    font-size: 11px;
    color: #1e3f8b;
}

.zoom-btn {
    flex: none;
    position: relative;
    width: 16px;
    height: 16px;
    border-radius: 50%;
    border: 1px solid #7a94b8;
    background: radial-gradient(circle at 50% 35%, #f3f7fc, #a9bfdc);
}

.zoom-h {
    position: absolute;
    left: 3px;
    top: 6px;
    width: 8px;
    height: 2px;
    background-color: #4a5a70;
}

.zoom-v {
    position: absolute;
    left: 6px;
    top: 3px;
    width: 2px;
    height: 8px;
    background-color: #4a5a70;
}

.zoom-track {
    flex: none;
    position: relative;
    width: 102px;
    height: 2px;
    background-color: #e3edf9;
    border-bottom: 1px solid #8ba8cd;
}

.zoom-thumb {
    position: absolute;
    left: 46px;
    top: -7px;
    width: 9px;
    height: 13px;
    background: linear-gradient(#f6f9fd, #bcd0e8);
    border: 1px solid #6f8db5;
    border-radius: 1px 1px 4px 4px;
}

/* taskbar */
.taskbar {
    flex: none;
    height: 40px;
    display: flex;
    align-items: center;
    gap: 4px;
    background-color: #101010;
    color: #fff;
}

.task {
    flex: none;
    width: 58px;
    height: 38px;
    display: flex;
    align-items: center;
    justify-content: center;
}

.task-start {
    width: 48px;
    padding-left: 2px;
}

.is-open {
    background-color: #3c3c3c;
    border: 1px solid #666;
}

.task-word {
    width: 50px;
    background-color: #5a5a5a;
    border: 1px solid #ddd;
}

.task-stack {
    flex: none;
    width: 4px;
    height: 38px;
    margin-left: -3px;
    background-color: #444;
    border: 1px solid #ccc;
}

.tray {
    margin-left: auto;
    display: flex;
    align-items: center;
    gap: 8px;
}

.tray-up {
    width: 0;
    height: 0;
    margin-right: 5px;
    border-left: 4px solid transparent;
    border-right: 4px solid transparent;
    border-bottom: 4px solid #fff;
}

.clock {
    width: 86px;
    margin-left: -8px;
    padding: 1px 0 0 2px;
    display: flex;
    flex-direction: column;
    align-items: center;
    font-size: 12px;
    line-height: 17px;
    color: #f2f2f2;
}
```
